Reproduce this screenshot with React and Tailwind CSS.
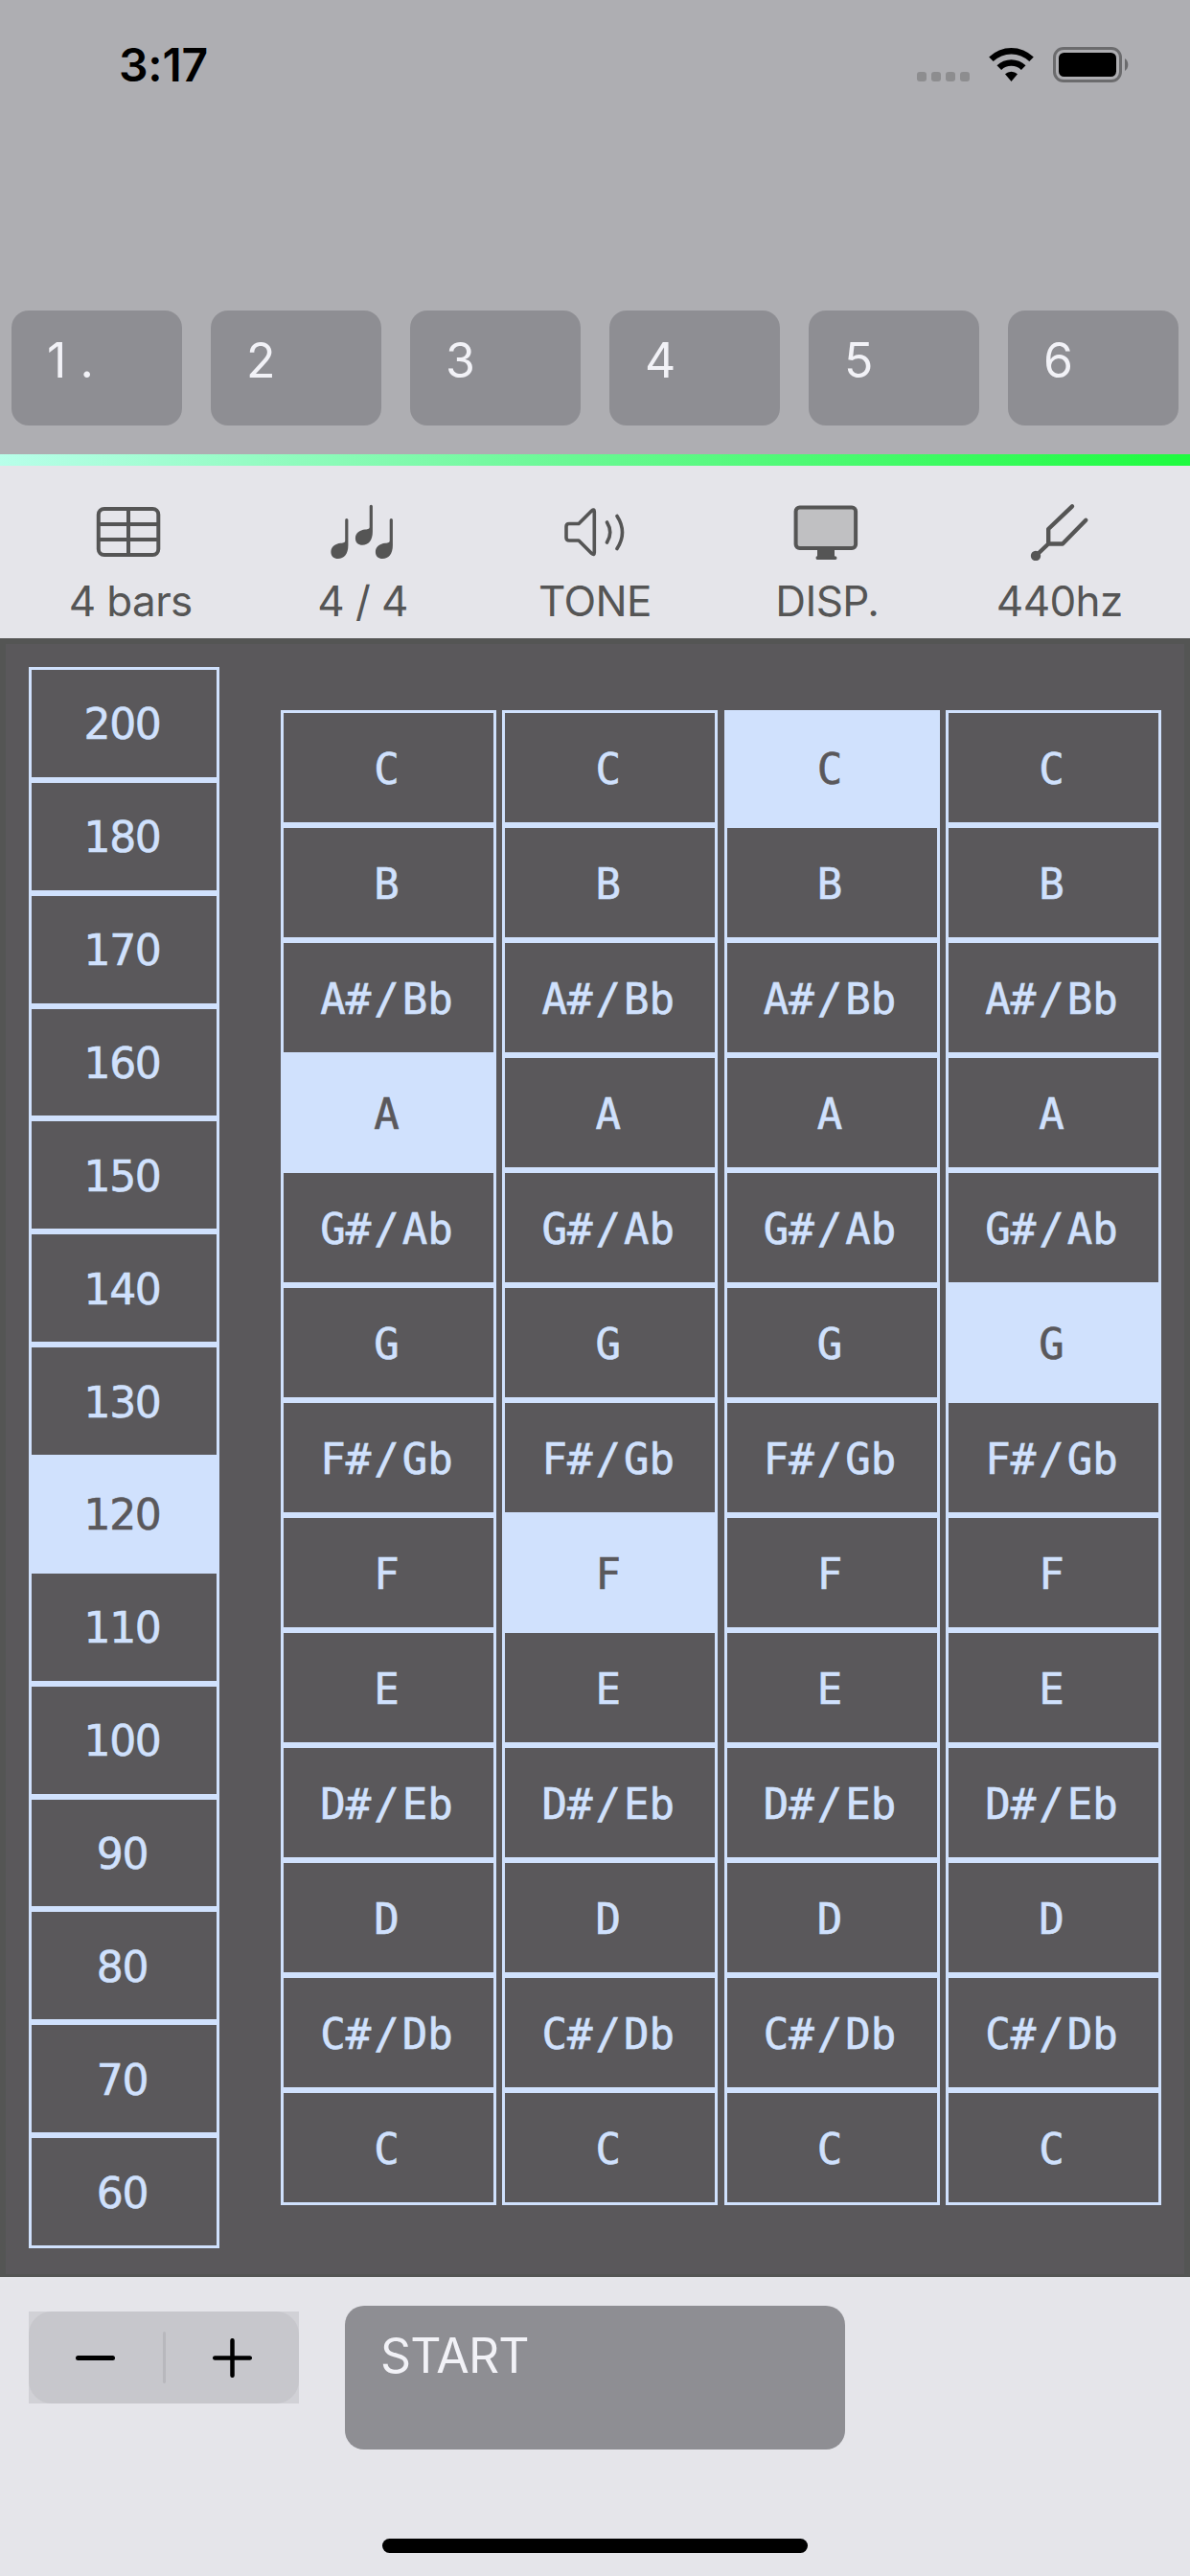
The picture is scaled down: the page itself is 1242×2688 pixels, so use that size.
import React from "react";

const tempos = [200, 180, 170, 160, 150, 140, 130, 120, 110, 100, 90, 80, 70, 60];
const notes = ["C", "B", "A#/Bb", "A", "G#/Ab", "G", "F#/Gb", "F", "E", "D#/Eb", "D", "C#/Db", "C"];
const selectedRows = [3, 7, 0, 5];

function StatusBar() {
  return (
    <div className="flex h-[135px] justify-between pl-[124px] pr-[64px]">
      <div className="mt-[38px] font-[Inter] text-[48px] font-semibold leading-[60px] tracking-[-0.2px] text-black">3:17</div>
      <div className="mt-[49px] flex h-[37px]">
        <div className="mr-[20px] mt-[26px] flex gap-[5px]">
          {[0, 1, 2, 3].map((i) => (
            <span key={i} className="size-[10px] rounded-[3px] bg-[#8d8d8f]" />
          ))}
        </div>
        <svg className="mr-[20px] h-[36px] w-[47px]" viewBox="0 0 47 36">
          <path d="M0.2 10.5 A33.5 33.5 0 0 1 46.8 10.5 L42.3 15.1 A27 27 0 0 0 4.7 15.1 Z" />
          <path d="M8.5 19.2 A21.6 21.6 0 0 1 38.5 19.2 L33.9 24 A15 15 0 0 0 13.1 24 Z" />
          <path d="M17 28.2 A9.6 9.6 0 0 1 30 28.2 L23.5 36 Z" />
        </svg>
        <svg className="h-[37px] w-[79px]" viewBox="0 0 79 37">
          <rect x="1.5" y="1.5" width="69" height="34" rx="9.5" fill="none" stroke="#6b6b6d" strokeWidth="3" />
          <rect x="6" y="6" width="60" height="25" rx="5.5" />
          <path d="M75 12 A8 8 0 0 1 75 25 Z" fill="#6b6b6d" />
        </svg>
      </div>
    </div>
  );
}

function TableIcon() {
  return (
    <svg className="h-[60px] w-[68px] overflow-visible" viewBox="0 0 68 60" fill="none" stroke="#555555" strokeWidth="4">
      <rect x="0.8" y="6" width="62.5" height="48" rx="6" />
      <path d="M32 6V54M1 22H63M1 38H63" />
    </svg>
  );
}

function NotesIcon() {
  return (
    <svg className="h-[60px] w-[68px] overflow-visible" viewBox="0 0 68 60" fill="#555555">
      <path id="note" d="M15.2 17.5Q15.2 16 16.8 16Q18.4 16 18.400 17.500V44C18.400 53 14 58 7.800 58C3.500 58 0.400 55.500 0.400 51C0.400 45.500 5 42.400 10.500 41.800C14 41.400 15.200 41 15.200 39Z" />
      <use href="#note" x="25.500" y="-14.300" />
      <use href="#note" x="46.500" />
    </svg>
  );
}

function SpeakerIcon() {
  return (
    <svg className="h-[60px] w-[68px]" viewBox="0 0 68 60" fill="none" stroke="#555555" strokeWidth="3.6" strokeLinecap="round" strokeLinejoin="round">
      <path d="M7 21.500H17L30.500 8Q33.300 5.500 33.300 9V51.500Q33.300 55 30.500 52.500L17 39H7Q4 39 4 36V24.500Q4 21.500 7 21.500Z" />
      <path d="M46.500 20Q53 30.500 46.500 41M57 13.500Q68 30.500 57 47.500" />
    </svg>
  );
}

function DisplayIcon() {
  return (
    <svg className="h-[60px] w-[68px] overflow-visible" viewBox="0 0 68 60">
      <path d="M24 47H42V55.300Q44.500 55.300 44.500 57Q44.500 59 43 59H24Q22.500 59 22.500 57Q22.500 55.300 24 55.300Z" fill="#555555" />
      <rect x="1.6" y="4.6" width="62.500" height="42.500" rx="4" fill="#c0c0c2" stroke="#555555" strokeWidth="4" />
    </svg>
  );
}

function ForkIcon() {
  return (
    <svg className="h-[60px] w-[68px]" viewBox="0 0 68 60" fill="none" stroke="#555555" strokeWidth="4.400" strokeLinecap="round" strokeLinejoin="round">
      <path d="M47 3.300L22.200 27V42.500H37L61.300 17.800M22.200 42.500L9 55" />
      <circle cx="9" cy="55" r="5.200" fill="#555555" stroke="none" />
    </svg>
  );
}

const tools = [
  { label: "4 bars", Icon: TableIcon },
  { label: "4 / 4", Icon: NotesIcon },
  { label: "TONE", Icon: SpeakerIcon },
  { label: "DISP.", Icon: DisplayIcon },
  { label: "440hz", Icon: ForkIcon },
];

function Cell({ label, active }) {
  const parts = String(label).split("/");
  return (
    <div
      className={`flex min-h-0 flex-1 items-center justify-center border-[3px] border-[#d0e1fd] pr-[4px] pt-[3px] leading-none [-webkit-text-stroke:0.6px] ${
        active ? "bg-[#d0e1fd] text-[#5a585b]" : "text-[#d0e1fd]"
      }`}
    >
      <span className="whitespace-nowrap">
        {parts[0]}
        {parts.length > 1 && <span className="px-[3px]">/</span>}
        {parts[1]}
      </span>
    </div>
  );
}

export default function App() {
  return (
    <div className="flex h-[2688px] w-[1242px] flex-col overflow-hidden bg-[#e5e5ea] font-[Inter]">
      <header className="h-[474px] shrink-0 bg-[#aeaeb2]">
        <StatusBar />
        <div className="mt-[189px] flex gap-[30px] px-[12px]">
          {["1 .", "2", "3", "4", "5", "6"].map((n) => (
            <button key={n} className="h-[120px] w-[178px] whitespace-pre rounded-[18px] bg-[#8e8e93] pb-[16px] pl-[37px] text-left text-[50px] leading-[60px] text-[#f2f2f7]">
              {n}
            </button>
          ))}
        </div>
      </header>
      <div className="h-[12px] shrink-0 bg-linear-[93deg,#b8ffea_0%,#6af894_48%,#1efb3f_100%]" />
      <nav className="grid h-[180px] shrink-0 grid-cols-5 px-[15px]">
        {tools.map(({ label, Icon }) => (
          <div key={label} className="flex flex-col items-center pt-[39px] text-[44px] leading-[60px] tracking-[-0.6px] text-[#555555]">
            <Icon />
            <span className="mt-[12px] whitespace-nowrap">{label}</span>
          </div>
        ))}
      </nav>
      <main className="flex h-[1710px] shrink-0 items-start border-6 border-b-3 border-[#545554] bg-[#5a585b] pl-[24px]">
        <div className="mt-[24px] flex h-[1650px] w-[199px] flex-col font-['DejaVu_Sans'] text-[44px] tracking-[-1.3px]">
          {tempos.map((t) => (
            <Cell key={t} label={t} active={t === 120} />
          ))}
        </div>
        <div className="ml-[64px] mt-[69px] flex gap-[6.300px] font-['DejaVu_Sans_Mono'] text-[44px]">
          {selectedRows.map((sel, c) => (
            <div key={c} className="flex h-[1560px] w-[225px] flex-col">
              {notes.map((n, i) => (
                <Cell key={i} label={n} active={i === sel} />
              ))}
            </div>
          ))}
        </div>
      </main>
      <footer className="flex flex-1 flex-col items-center">
        <div className="flex w-full items-start pl-[30px] pt-[30px]">
          <div className="mt-[6px] bg-[#d1d1d6]">
            <div className="flex h-[96px] w-[282px] items-center rounded-[24px] bg-[#c7c7cc]">
              <div className="flex flex-1 justify-center">
                <span className="h-[5px] w-[41px] rounded-full bg-black" />
              </div>
              <span className="h-[54px] w-[3px] rounded-full bg-[#b8b8bd]" />
              <div className="flex flex-1 justify-center">
                <svg className="size-[41px]" viewBox="0 0 41 41" stroke="black" strokeWidth="4.500" strokeLinecap="round">
                  <path d="M20.500 2.200V38.800M2.200 20.500H38.800" />
                </svg>
              </div>
            </div>
          </div>
          <button className="ml-[48px] h-[150px] w-[522px] rounded-[20px] bg-[#8e8e93] pb-[46px] pl-[37px] text-left text-[50px] leading-[60px] tracking-[-0.9px] text-[#f2f2f7]">
            START
          </button>
        </div>
        <div className="mt-[93px] h-[15px] w-[444px] rounded-full bg-black" />
      </footer>
    </div>
  );
}
